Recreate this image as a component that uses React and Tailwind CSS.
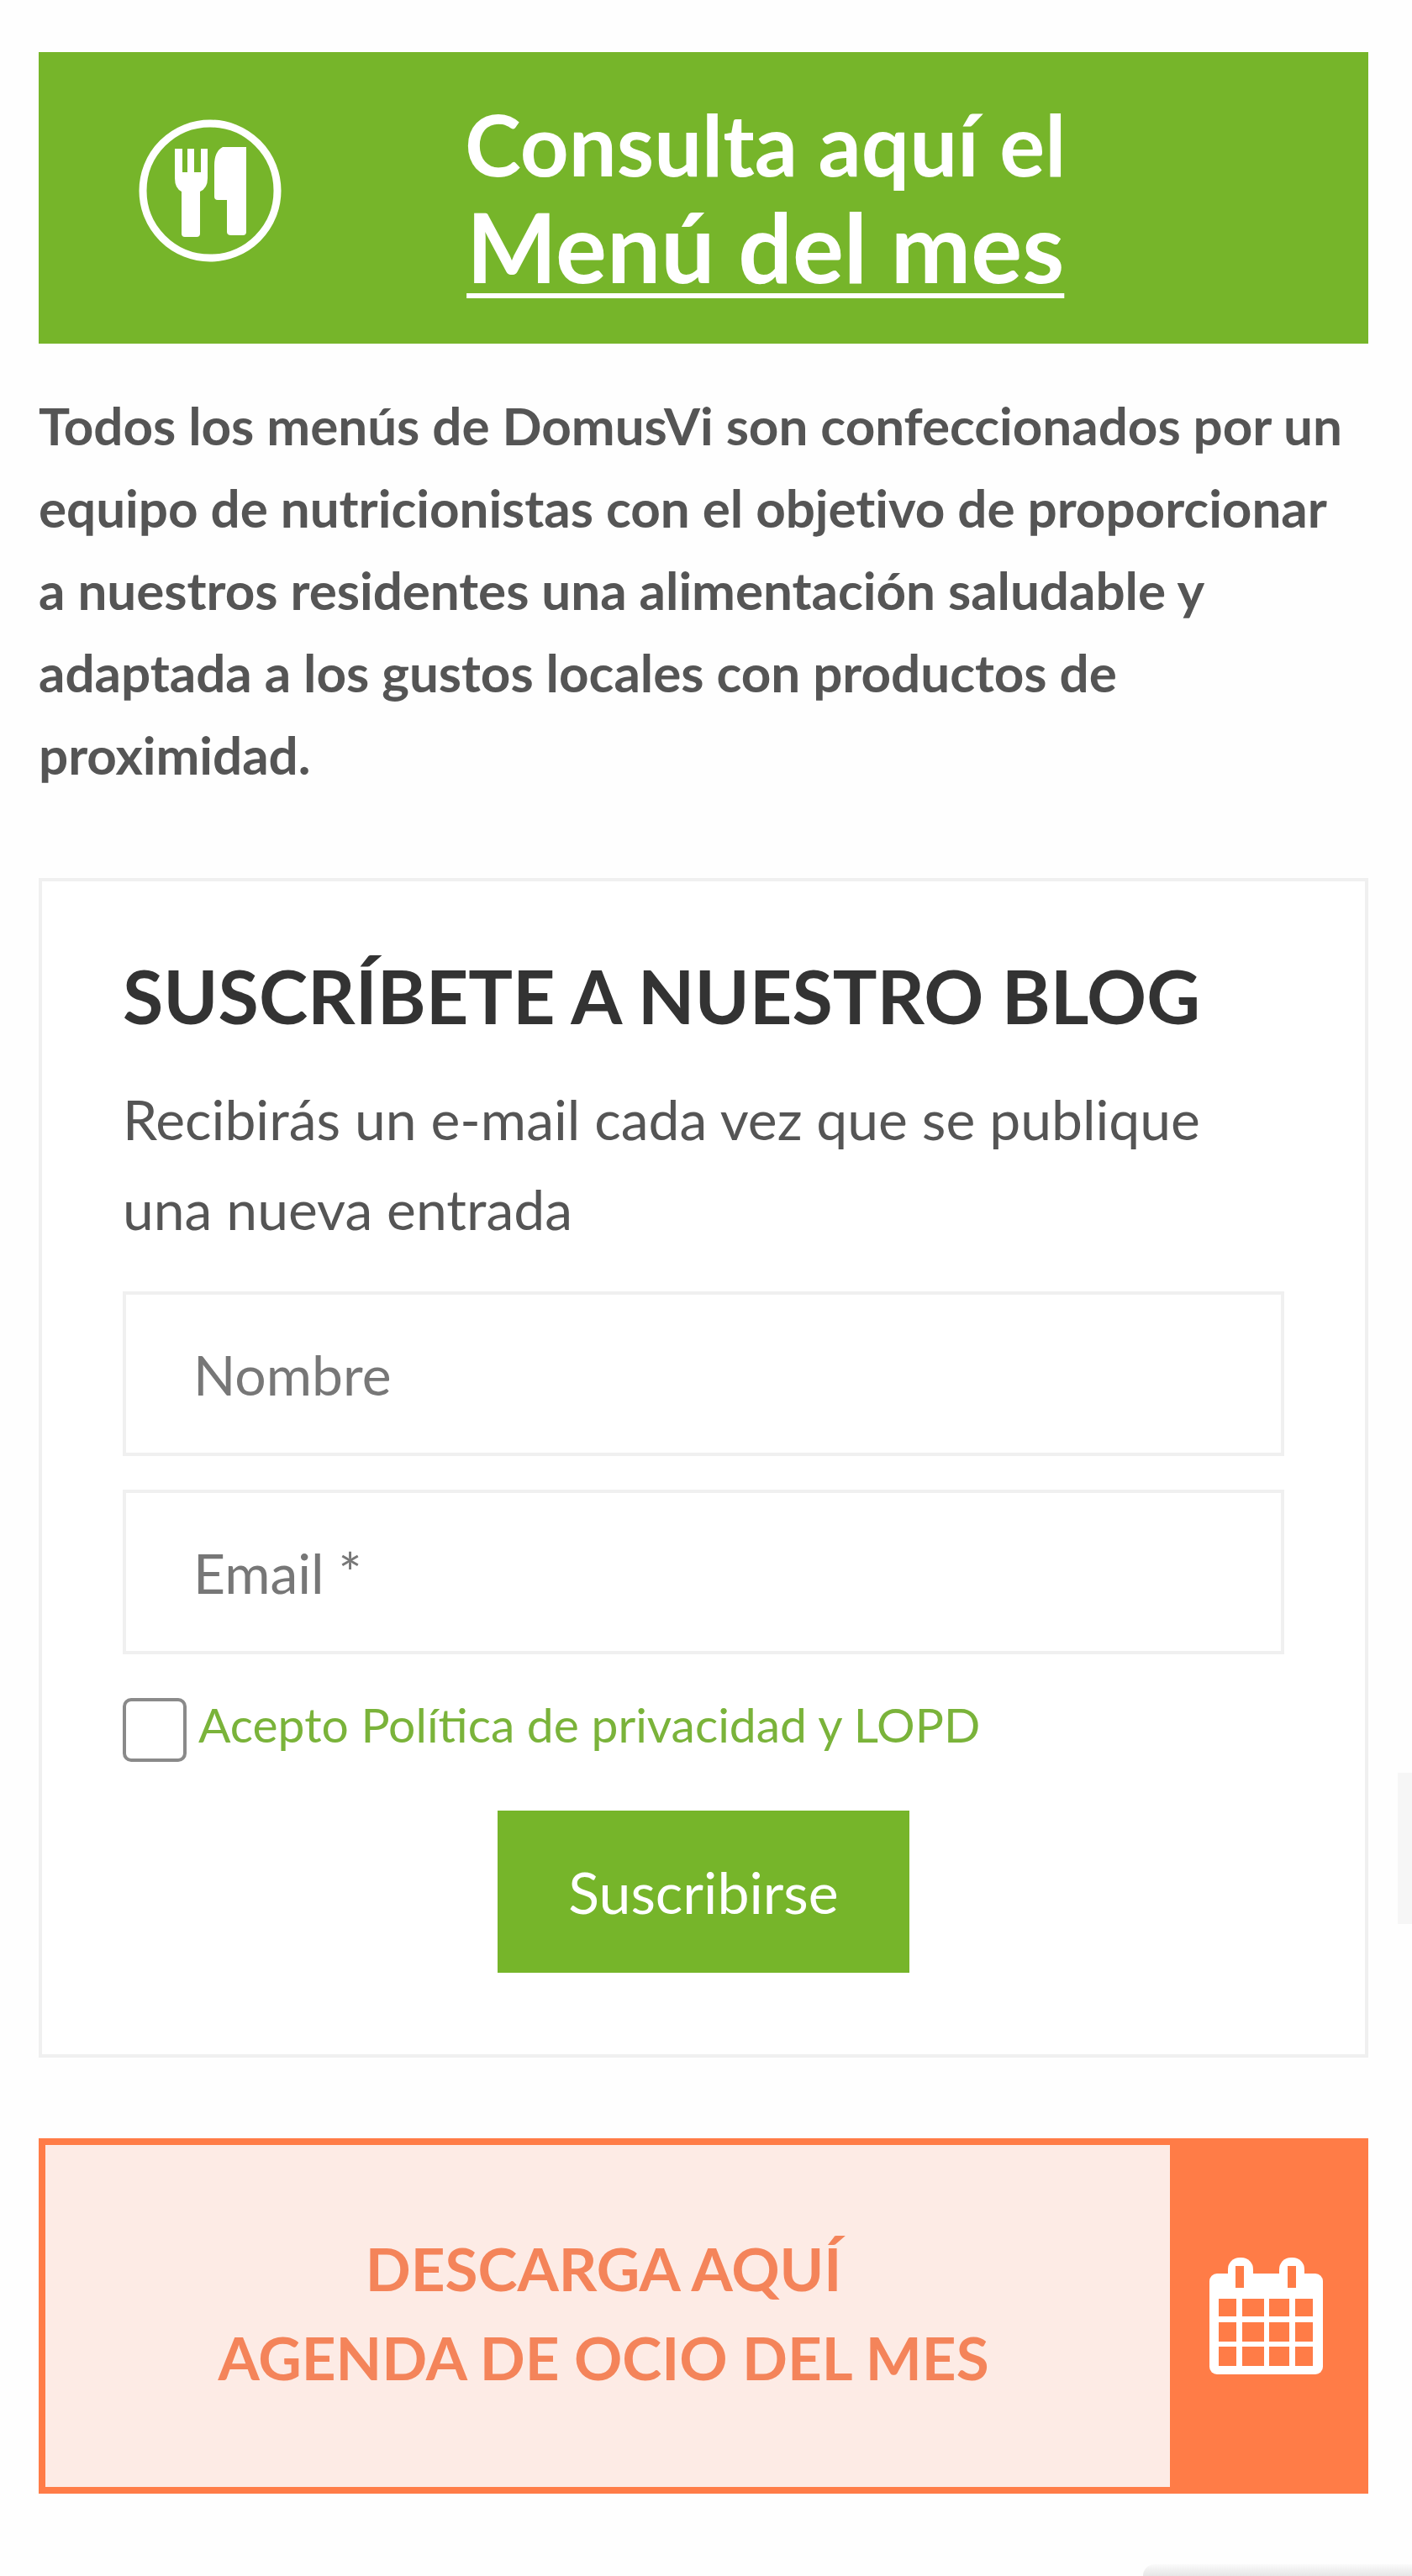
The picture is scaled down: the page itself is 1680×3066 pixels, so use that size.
function MenuIcon() {
  return (
    <svg viewBox="0 0 170 170" className="mb-[18px] w-[170px] h-[170px] shrink-0" fill="#fff">
      <circle cx="85" cy="85" r="80" fill="none" stroke="#fff" strokeWidth="9" />
      <path d="M43 35h9v28h6V35h8v28h8V35h8v35q0 12-9 16v50q0 4-4 4H55q-4 0-4-4V86q-8-4-8-16Z" />
      <path d="M100 33h28v101q0 4-4 4h-14q-5 0-5-4V96H94q-4 0-4-4V55q0-17 10-22Z" />
    </svg>
  );
}

function AgendaIcon() {
  const xs = [[11, 21], [39, 26], [71, 24], [102, 21]];
  const ys = [[49, 21], [77, 23], [106, 23]];
  return (
    <svg viewBox="0 0 135 140" className="w-[135px] h-[140px]" fill="#fff">
      <rect x="0" y="19" width="135" height="120" rx="9" />
      <rect x="22" y="0" width="30" height="40" rx="14" />
      <rect x="83" y="0" width="30" height="40" rx="14" />
      <rect x="31" y="10" width="10" height="26" fill="#ff7c47" />
      <rect x="93" y="10" width="10" height="26" fill="#ff7c47" />
      {ys.map(([y, h]) =>
        xs.map(([x, w]) => <rect key={`${x}-${y}`} x={x} y={y} width={w} height={h} fill="#ff7c47" />)
      )}
    </svg>
  );
}

export default function App() {
  return (
    <div className="relative h-[3066px] overflow-hidden bg-[#fefefe] pl-[46px] pr-[52px] pt-[62px] font-['Lato',sans-serif]">
      <a className="flex h-[347px] items-center gap-[218px] bg-[#76b52a] pl-[119px] text-white">
        <MenuIcon />
        <div className="flex flex-col items-center pb-[7px] font-bold">
          <span className="text-[101px] leading-[122px]">Consulta aquí el</span>
          <span className="text-[114px] leading-[122px] underline decoration-[6px] underline-offset-[12px]">Menú del mes</span>
        </div>
      </a>

      <p className="mt-[48px] pr-[20px] text-[62px] leading-[98px] font-bold tracking-[-0.05px] text-[#555]">
        Todos los menús de DomusVi son confeccionados por un equipo de nutricionistas con el objetivo de proporcionar a nuestros residentes una alimentación saludable y adaptada a los gustos locales con productos de proximidad.
      </p>

      <form className="mt-[98px] h-[1404px] border-4 border-[#f0f0f0] bg-white px-[96px] pt-[80px]">
        <h2 className="text-[88px] leading-[112px] font-bold text-[#333]">SUSCRÍBETE A NUESTRO BLOG</h2>
        <p className="mt-[37px] text-[66px] leading-[107px] text-[#555]">
          Recibirás un e-mail cada vez que se publique una nueva entrada
        </p>
        <div className="mt-[45px] flex flex-col gap-[40px]">
          <input placeholder="Nombre" className="h-[196px] w-full border-4 border-[#f0f0f0] px-[80px] text-[66px] outline-none placeholder:text-[#777]" />
          <input placeholder="Email *" className="h-[196px] w-full border-4 border-[#f0f0f0] px-[80px] text-[66px] outline-none placeholder:text-[#777]" />
        </div>
        <label className="mt-[52px] flex items-start gap-[14px]">
          <span className="h-[76px] w-[76px] shrink-0 rounded-[10px] border-4 border-[#8a8a8a] bg-white" />
          <span className="text-[57px] leading-[62px] text-[#7ab33a]">Acepto Política de privacidad y LOPD</span>
        </label>
        <div className="mt-[58px] flex justify-center">
          <button type="button" className="h-[193px] w-[490px] bg-[#76b52a] text-[68px] text-white">Suscribirse</button>
        </div>
      </form>

      <a className="mt-[96px] flex h-[423px] border-8 border-[#ff7c47] bg-[#fdebe5]">
        <div className="flex flex-1 flex-col items-center justify-center pb-[8px] pr-[10px] text-[71px] leading-[106px] font-bold text-[#f4845a]">
          <span>DESCARGA AQUÍ</span>
          <span>AGENDA DE OCIO DEL MES</span>
        </div>
        <div className="flex w-[228px] items-center justify-center bg-[#ff7c47]">
          <AgendaIcon />
        </div>
      </a>

      <div className="absolute right-0 top-[2110px] h-[180px] w-[17px] bg-[#f6f6f6]" />
      <div className="absolute bottom-0 right-0 h-[14px] w-[320px] rounded-tl-[20px] bg-gradient-to-b from-[#fafafa] to-[#e6e6e6]" />
    </div>
  );
}
